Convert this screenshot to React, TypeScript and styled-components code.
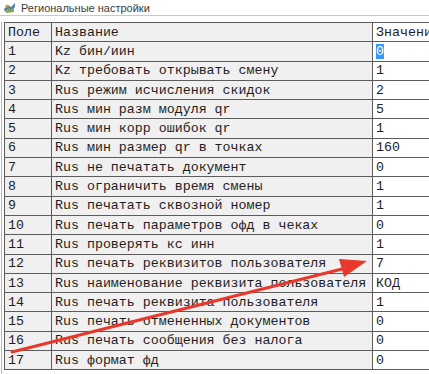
import React from 'react';
import styled, { createGlobalStyle } from 'styled-components';

const GlobalStyle = createGlobalStyle`
  html, body { margin: 0; padding: 0; background: #ffffff; }
`;

type Row = { id: number; name: string; value: string; selected?: boolean };

const rows: Row[] = [
  { id: 1, name: 'Kz бин/иин', value: '0', selected: true },
  { id: 2, name: 'Kz требовать открывать смену', value: '1' },
  { id: 3, name: 'Rus режим исчисления скидок', value: '2' },
  { id: 4, name: 'Rus мин разм модуля qr', value: '5' },
  { id: 5, name: 'Rus мин корр ошибок qr', value: '1' },
  { id: 6, name: 'Rus мин размер qr в точках', value: '160' },
  { id: 7, name: 'Rus не печатать документ', value: '0' },
  { id: 8, name: 'Rus ограничить время смены', value: '1' },
  { id: 9, name: 'Rus печатать сквозной номер', value: '1' },
  { id: 10, name: 'Rus печать параметров офд в чеках', value: '0' },
  { id: 11, name: 'Rus проверять кс инн', value: '1' },
  { id: 12, name: 'Rus печать реквизитов пользователя', value: '7' },
  { id: 13, name: 'Rus наименование реквизита пользователя', value: 'КОД' },
  { id: 14, name: 'Rus печать реквизита пользователя', value: '1' },
  { id: 15, name: 'Rus печать отмененных документов', value: '0' },
  { id: 16, name: 'Rus печать сообщения без налога', value: '0' },
  { id: 17, name: 'Rus формат фд', value: '0' },
];

const Window = styled.div`
  position: relative;
  width: 429px;
  height: 374px;
  overflow: hidden;
  background: #ffffff;
  display: flex;
  flex-direction: column;
`;

const TitleBar = styled.div`
  height: 15px;
  display: flex;
  align-items: center;
  gap: 5px;
  padding-left: 3px;
  border-bottom: 1px solid #c9c9c9;
  font-family: 'Liberation Sans', Arial, sans-serif;
  font-size: 11px;
  color: #3c3c3c;
`;

const Body = styled.div`
  flex: 1;
  display: flex;
  padding-top: 6px;
`;

const Gutter = styled.div`
  width: 2px;
  margin-left: 1px;
  margin-right: 2px;
  border-left: 1px solid #b8b8b8;
  background: #e6e6e6;
`;

const Grid = styled.table`
  border-collapse: collapse;
  table-layout: fixed;
  width: 460px;
  font-family: 'Liberation Mono', 'Courier New', monospace;
  font-size: 13.3px;
  color: #1e1e1e;
  align-self: flex-start;
`;

const Tr = styled.tr`
  height: 19.3px;
`;

const Cell = styled.td<{ $white?: boolean }>`
  border: 1px solid #5c5c5c;
  background: ${(p) => (p.$white ? '#ffffff' : '#f0f0f0')};
  padding: 0 0 0 3px;
  white-space: nowrap;
  overflow: hidden;
  line-height: 17px;
`;

const HeadCell = styled(Cell).attrs({ as: 'th' })`
  font-weight: normal;
  text-align: left;
`;

const Selected = styled.span`
  background: #3399ff;
  color: #ffffff;
`;

const Arrow = styled.svg`
  position: absolute;
  left: 0;
  top: 0;
  pointer-events: none;
`;

function AppIcon() {
  return (
    <svg width="13" height="12" viewBox="0 0 13 12">
      <path d="M1 7 L5 3 L8 5 L12 1 L12 5 L8 9 L5 7 L2 10 Z" fill="#5a7fa8" />
      <path d="M3 9 L6 6 L9 8 L11 6 L11 10 L3 11 Z" fill="#8aa34f" />
      <circle cx="4" cy="4" r="1.6" fill="#c9a23a" />
    </svg>
  );
}

export default function App() {
  return (
    <Window>
      <GlobalStyle />
      <TitleBar>
        <AppIcon />
        <span>Региональные настройки</span>
      </TitleBar>
      <Body>
        <Gutter />
        <Grid>
          <colgroup>
            <col style={{ width: 47 }} />
            <col style={{ width: 321 }} />
            <col style={{ width: 92 }} />
          </colgroup>
          <thead>
            <Tr>
              <HeadCell>Поле</HeadCell>
              <HeadCell>Название</HeadCell>
              <HeadCell $white>Значение</HeadCell>
            </Tr>
          </thead>
          <tbody>
            {rows.map((r) => (
              <Tr key={r.id}>
                <Cell>{r.id}</Cell>
                <Cell>{r.name}</Cell>
                <Cell $white>{r.selected ? <Selected>{r.value}</Selected> : r.value}</Cell>
              </Tr>
            ))}
          </tbody>
        </Grid>
      </Body>
      <Arrow width="429" height="374" viewBox="0 0 429 374">
        <line x1="12" y1="352" x2="346" y2="268" stroke="#e8382c" strokeWidth="3" strokeLinecap="round" />
        <polygon points="367,261 339,259 344,277" fill="#e8382c" />
      </Arrow>
    </Window>
  );
}
